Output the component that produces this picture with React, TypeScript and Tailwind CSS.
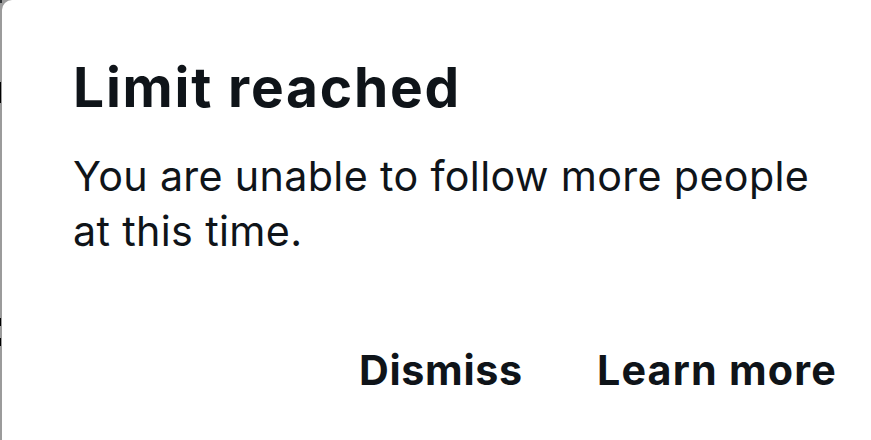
import React from 'react';

const App: React.FC = () => {
    return (
        <div className="flex w-[871px] h-[440px] bg-[#9b9b9b] overflow-hidden font-['Inter',sans-serif] text-[#0f1419]">
            {/* Backdrop strip */}
            <div className="flex flex-col w-[2px] shrink-0">
                <div className="h-[3px] bg-[#2f3336]" />
                <div className="mt-[79px] h-[21px] w-[1px] bg-black" />
                <div className="mt-[215px] h-[8px] w-[1px] bg-black" />
                <div className="mt-[12px] h-[8px] w-[1px] bg-black" />
            </div>

            {/* Dialog */}
            <div className="flex-1 flex flex-col bg-white rounded-tl-[10px] pl-[71px] pt-[54px]">
                <h1 className="text-[55px] leading-[66px] font-bold tracking-[1.8px]">Limit reached</h1>
                <p className="mt-[29px] w-[780px] text-[41.25px] leading-[55px] tracking-[0.33px]">
                    You are unable to follow more people at this time.
                </p>
                <div className="mt-[84px] flex justify-end gap-[74px] pr-[34px]">
                    <button className="text-[41.25px] leading-[55px] font-bold tracking-[0.7px]">Dismiss</button>
                    <button className="text-[41.25px] leading-[55px] font-bold tracking-[1.2px]">Learn more</button>
                </div>
            </div>
        </div>
    );
};

export default App;
